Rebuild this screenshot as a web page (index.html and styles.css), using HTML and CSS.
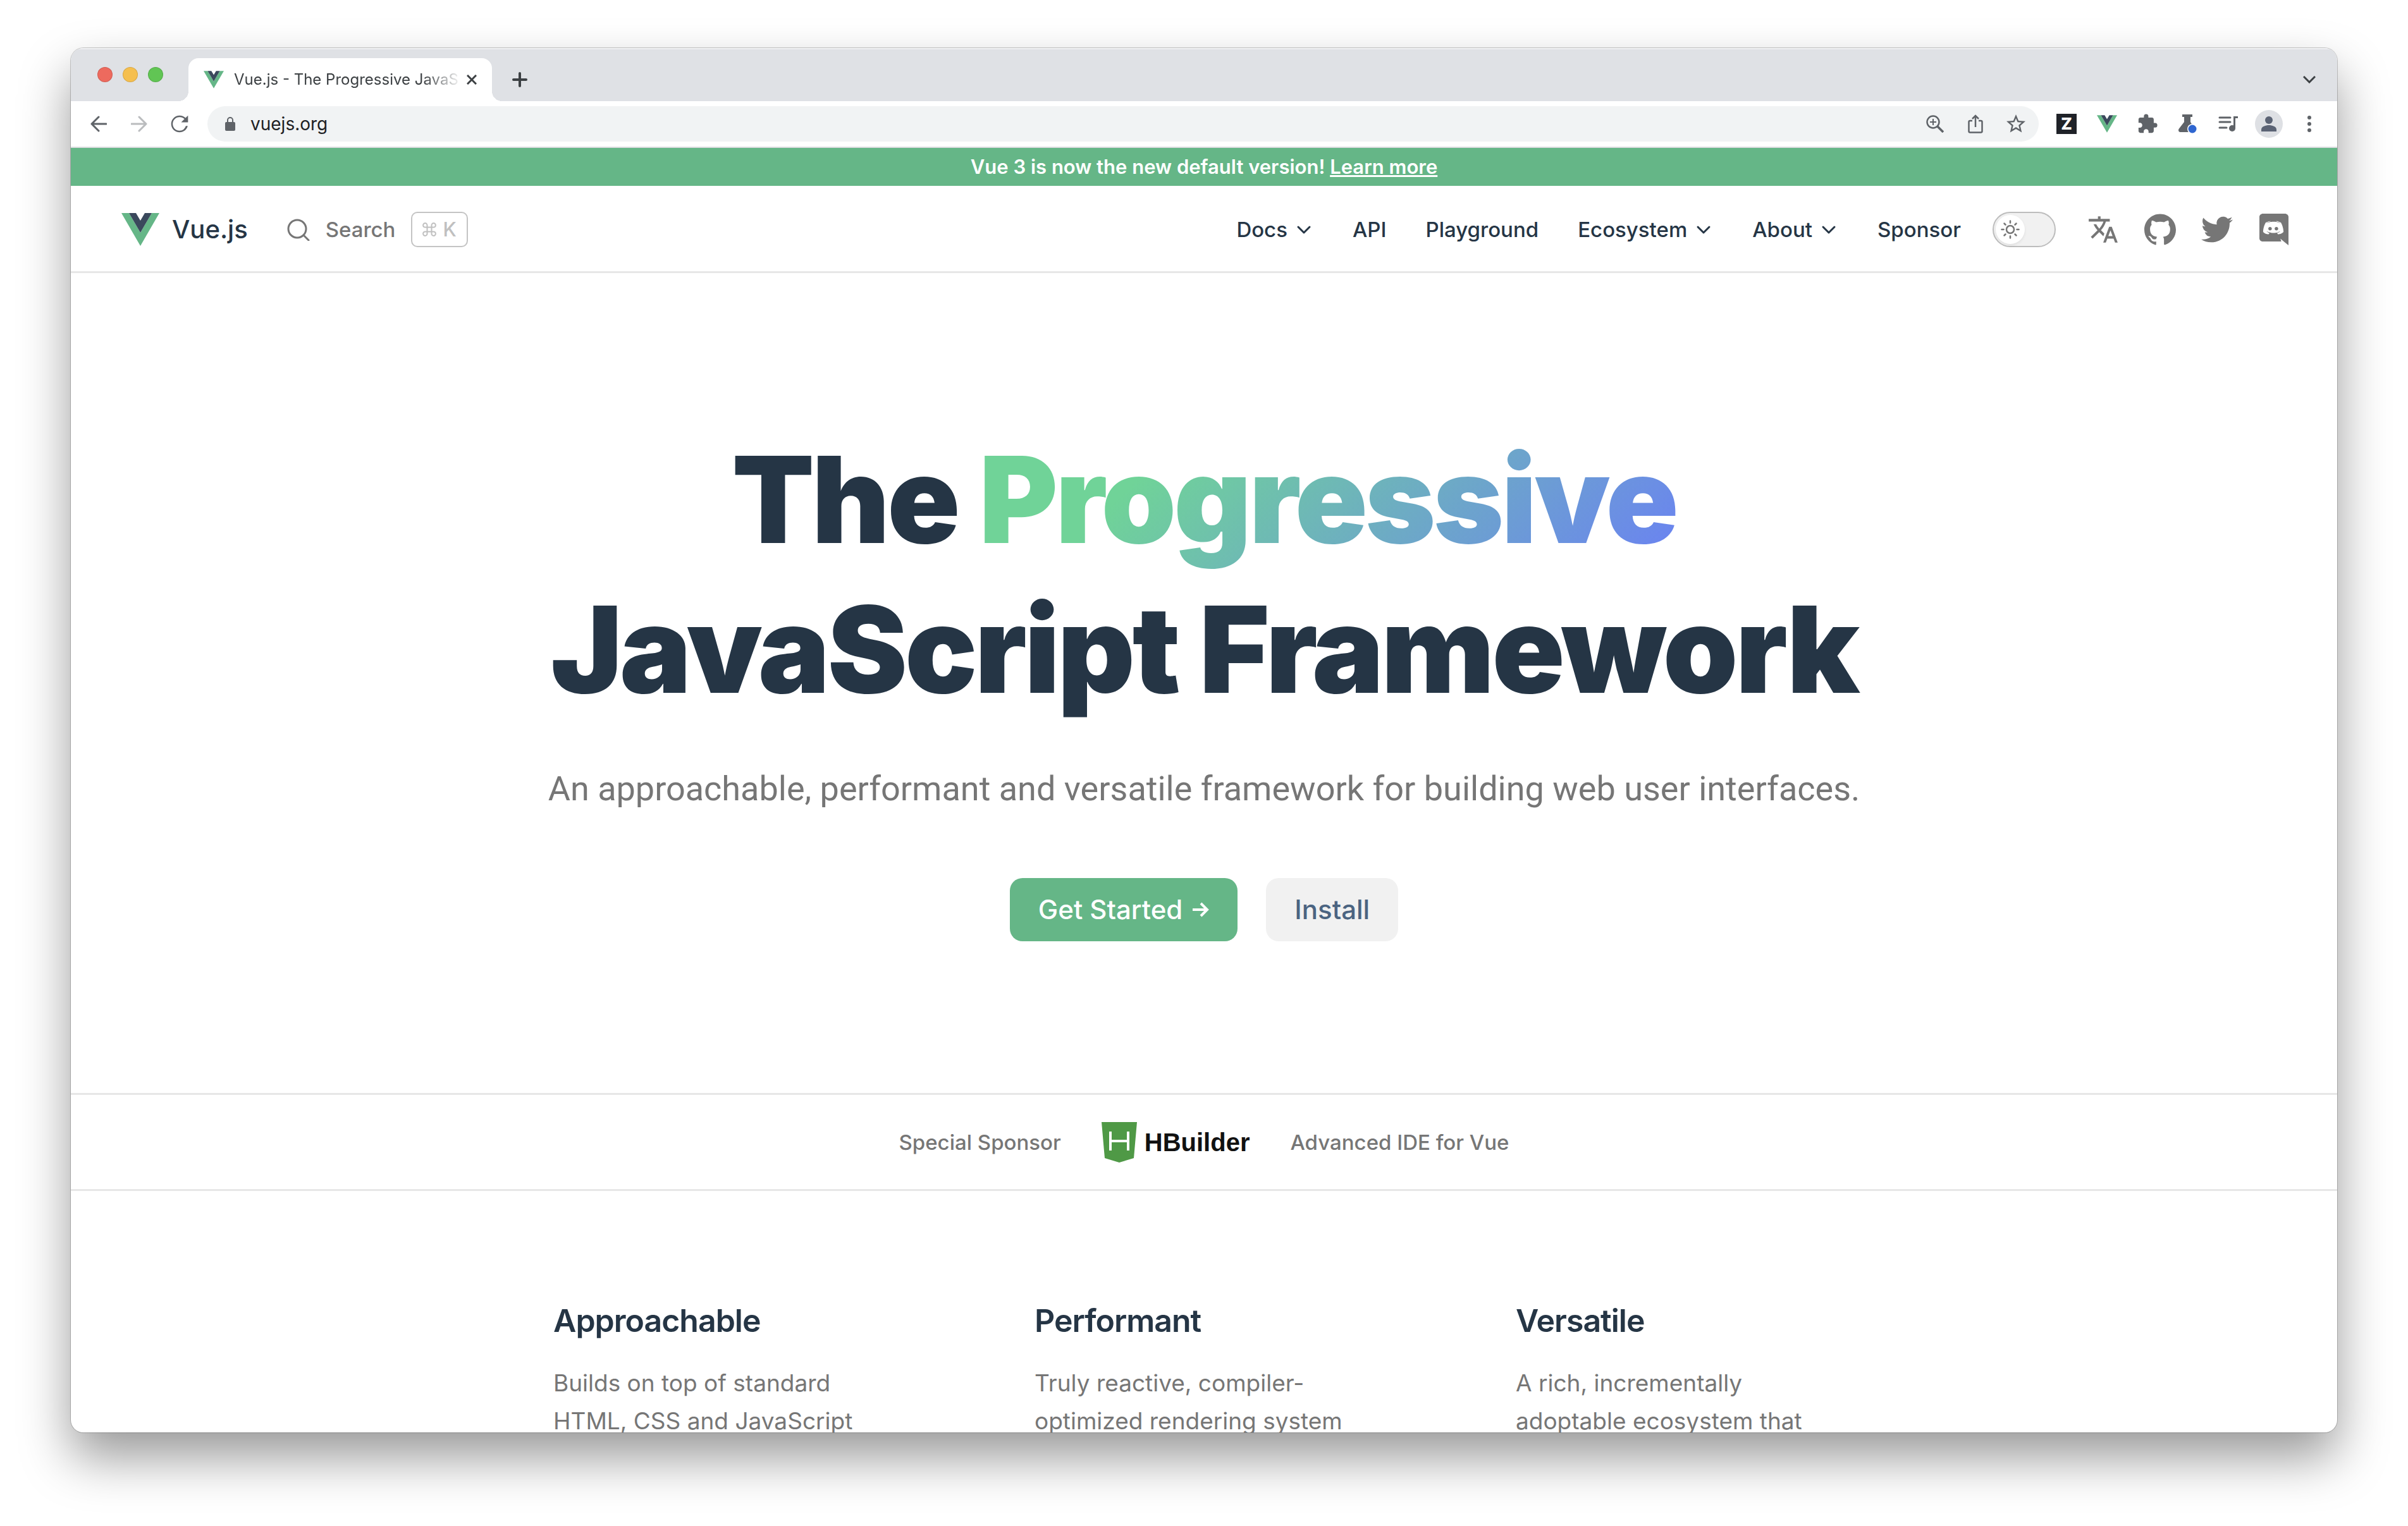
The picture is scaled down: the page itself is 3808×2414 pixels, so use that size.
FILE: index.html
```html
<!DOCTYPE html>
<html lang="en">
<head>
<meta charset="utf-8">
<title>Vue.js - The Progressive JavaScript Framework</title>
<link rel="stylesheet" href="styles.css">
</head>
<body>
<svg class="defs" aria-hidden="true">
  <symbol id="vue" viewBox="0 0 60 52">
    <path fill="#65b687" d="M0 0h12l18 31L48 0h12L30 52z"/>
    <path fill="#3a485c" d="M12 0h11l7 12 7-12h11L30 31z"/>
  </symbol>
  <symbol id="chevron" viewBox="0 0 30 30">
    <path fill="none" stroke="currentColor" stroke-width="3" stroke-linecap="round" stroke-linejoin="round" d="M6 11l9 9 9-9"/>
  </symbol>
</svg>

<div class="window">
  <div class="tabstrip">
    <div class="lights">
      <button class="light light-close" aria-label="Close window"></button>
      <button class="light light-min" aria-label="Minimize window"></button>
      <button class="light light-max" aria-label="Zoom window"></button>
    </div>
    <div class="tab">
      <svg class="favicon"><use href="#vue"/></svg>
      <span class="tab-title">Vue.js - The Progressive JavaS</span>
      <button class="icon-btn tab-close" aria-label="Close tab">
        <svg width="16" height="16" viewBox="0 0 16 16"><path fill="none" stroke="currentColor" stroke-width="3" d="M1 1l14 14M15 1L1 15"/></svg>
      </button>
    </div>
    <button class="icon-btn new-tab" aria-label="New tab">
      <svg width="24" height="24" viewBox="0 0 24 24"><path fill="none" stroke="currentColor" stroke-width="4" stroke-linecap="round" d="M12 2v20M2 12h20"/></svg>
    </button>
    <button class="icon-btn tab-search" aria-label="Search tabs">
      <svg width="20" height="12" viewBox="0 0 20 12"><path fill="none" stroke="currentColor" stroke-width="3" d="M1 1l9 9 9-9"/></svg>
    </button>
  </div>

  <div class="toolbar">
    <button class="icon-btn tool" aria-label="Back">
      <svg width="26" height="26" viewBox="0 0 26 26"><path fill="none" stroke="currentColor" stroke-width="3" stroke-linecap="round" stroke-linejoin="round" d="M25 13H2M13 2L2 13l11 11"/></svg>
    </button>
    <button class="icon-btn tool tool-off" aria-label="Forward">
      <svg width="26" height="26" viewBox="0 0 26 26"><path fill="none" stroke="currentColor" stroke-width="3" stroke-linecap="round" stroke-linejoin="round" d="M1 13h23M13 2l11 11-11 11"/></svg>
    </button>
    <button class="icon-btn tool" aria-label="Reload">
      <svg width="40" height="40" viewBox="0 0 24 24"><path fill="currentColor" d="M17.65 6.35A7.958 7.958 0 0 0 12 4c-4.42 0-7.99 3.58-7.99 8s3.57 8 7.99 8c3.73 0 6.84-2.55 7.73-6h-1.800A6.500 6.500 0 0 1 12 18.500c-3.600 0-6.500-2.900-6.500-6.500s2.900-6.500 6.500-6.500c1.800 0 3.400.700 4.600 1.900L13.500 10.500h6.500V4l-2.350 2.350z"/></svg>
    </button>
    <div class="omnibox">
      <svg class="lock" width="16" height="22" viewBox="0 0 16 22"><rect y="8" width="16" height="14" rx="2" fill="currentColor"/><path fill="none" stroke="currentColor" stroke-width="2" d="M4 9V5a4 4 0 0 1 8 0v4"/></svg>
      <input class="address" type="text" aria-label="Address" value="vuejs.org">
      <button class="icon-btn tool" aria-label="Zoom">
        <svg width="28" height="28" viewBox="0 0 28 28"><g fill="none" stroke="currentColor"><circle cx="11" cy="11" r="9.500" stroke-width="2.500"/><path stroke-width="2" d="M11 6v10M6 11h10"/><path stroke-width="3.500" d="M18 18l9 9"/></g></svg>
      </button>
      <button class="icon-btn tool" aria-label="Share">
        <svg width="24" height="30" viewBox="0 0 24 30"><g fill="none" stroke="currentColor" stroke-width="2.500"><path d="M7 10H3.500a2 2 0 0 0-2 2v14.500a2 2 0 0 0 2 2h17a2 2 0 0 0 2-2V12a2 2 0 0 0-2-2H17"/><path d="M12 20V2.500M7 7l5-5 5 5"/></g></svg>
      </button>
      <button class="icon-btn tool" aria-label="Bookmark">
        <svg width="36" height="36" viewBox="0 0 24 24"><path fill="currentColor" d="M22 9.240l-7.190-.620L12 2 9.190 8.630 2 9.240l5.460 4.730L5.820 21 12 17.270 18.180 21l-1.630-7.030L22 9.240zM12 15.400l-3.760 2.270 1-4.280-3.320-2.880 4.380-.380L12 6.100l1.710 4.040 4.380.380-3.320 2.880 1 4.280L12 15.400z"/></svg>
      </button>
    </div>
    <button class="icon-btn tool" aria-label="Z extension"><span class="zed">Z</span></button>
    <button class="icon-btn tool" aria-label="Vue devtools"><svg class="favicon"><use href="#vue"/></svg></button>
    <button class="icon-btn tool" aria-label="Extensions">
      <svg width="34" height="34" viewBox="0 0 24 24"><path fill="currentColor" d="M20.500 11H19V7c0-1.100-.900-2-2-2h-4V3.500a2.500 2.500 0 0 0-5 0V5H4c-1.100 0-1.990.900-1.990 2v3.800H3.500c1.490 0 2.700 1.210 2.700 2.700s-1.210 2.700-2.700 2.700H2V20c0 1.100.900 2 2 2h3.800v-1.500c0-1.490 1.210-2.700 2.700-2.700s2.700 1.210 2.700 2.700V22H17c1.100 0 2-.900 2-2v-4h1.500a2.500 2.500 0 0 0 0-5z"/></svg>
    </button>
    <button class="icon-btn tool" aria-label="Experiments">
      <svg width="30" height="30" viewBox="0 0 30 30"><path fill="currentColor" d="M6 0h16v4h-3v8l6 10v6H3c-3 0-3.500-3-2.500-5L9 12V4H6z"/><circle cx="22" cy="23" r="8" fill="#fff"/><circle cx="22" cy="23" r="6.500" fill="#2f66d0"/></svg>
    </button>
    <button class="icon-btn tool" aria-label="Media controls">
      <svg width="32" height="26" viewBox="0 0 32 26"><g stroke="currentColor" stroke-width="3" stroke-linecap="round" fill="none"><path d="M2 3h17M2 10h17M2 19h11"/><path d="M25.500 20V2.500H31" stroke-linecap="butt"/></g><circle cx="22" cy="20" r="5" fill="currentColor"/></svg>
    </button>
    <button class="icon-btn tool" aria-label="Profile">
      <svg width="44" height="44" viewBox="0 0 44 44"><circle cx="22" cy="22" r="22" fill="#dee0e4"/><circle cx="22" cy="16" r="6" fill="#5b6374"/><path fill="#5b6374" d="M10 34v-3c0-5 7-7 12-7s12 2 12 7v3z"/></svg>
    </button>
    <button class="icon-btn tool" aria-label="Menu">
      <svg width="6" height="26" viewBox="0 0 6 26"><g fill="currentColor"><circle cx="3" cy="3" r="3"/><circle cx="3" cy="13" r="3"/><circle cx="3" cy="23" r="3"/></g></svg>
    </button>
  </div>

  <div class="banner">Vue 3 is now the new default version! <a href="#">Learn more</a></div>

  <header class="navbar">
    <a class="brand" href="#"><svg class="brand-logo"><use href="#vue"/></svg>Vue.js</a>
    <button class="search">
      <svg width="36" height="36" viewBox="0 0 36 36"><g fill="none" stroke="currentColor" stroke-width="3" stroke-linecap="round"><circle cx="16" cy="17" r="14"/><path d="M26 27l8 8"/></g></svg>
      <span>Search</span>
      <kbd class="keys">
        <svg width="22" height="22" viewBox="0 0 22 22"><path fill="none" stroke="currentColor" stroke-width="2" d="M7.500 7.500h7v7h-7zM7.500 7.500H4.500a3.200 3.200 0 1 1 3-3zM14.500 7.500v-3a3.200 3.200 0 1 1 3 3zM14.500 14.500h3a3.200 3.200 0 1 1-3 3zM7.500 14.500v3a3.200 3.200 0 1 1-3-3z"/></svg>
        K
      </kbd>
    </button>
    <nav class="menu">
      <button class="menu-item">Docs<svg class="chevron"><use href="#chevron"/></svg></button>
      <a class="menu-item" href="#">API</a>
      <a class="menu-item" href="#">Playground</a>
      <button class="menu-item">Ecosystem<svg class="chevron"><use href="#chevron"/></svg></button>
      <button class="menu-item">About<svg class="chevron"><use href="#chevron"/></svg></button>
      <a class="menu-item" href="#">Sponsor</a>
    </nav>
    <button class="toggle" role="switch" aria-checked="false" aria-label="Toggle dark mode">
      <span class="knob">
        <svg width="30" height="30" viewBox="0 0 30 30"><g fill="none" stroke="currentColor" stroke-width="2.500"><circle cx="15" cy="15" r="6"/><path stroke-linecap="round" d="M15 1.500v3M15 25.500v3M1.500 15h3M25.500 15h3M5.500 5.500l2 2M22.500 22.500l2 2M5.500 24.500l2-2M22.500 7.500l2-2"/></g></svg>
      </span>
    </button>
    <div class="socials">
      <a href="#" aria-label="Languages"><svg width="50" height="50" viewBox="0 0 24 24"><path fill="currentColor" d="M12.870 15.070l-2.540-2.510.030-.030A17.520 17.520 0 0 0 14.070 6H17V4h-7V2H8v2H1v2h11.170C11.500 7.920 10.440 9.750 9 11.350 8.070 10.320 7.300 9.190 6.690 8h-2c.730 1.630 1.730 3.170 2.980 4.560l-5.090 5.020L4 19l5-5 3.110 3.110.760-2.040zM18.500 10h-2L12 22h2l1.120-3h4.750L21 22h2l-4.500-12zm-2.620 7l1.620-4.330L19.120 17h-3.240z"/></svg></a>
      <a href="#" aria-label="GitHub"><svg width="50" height="50" viewBox="0 0 24 24"><path fill="currentColor" d="M12 .297c-6.630 0-12 5.373-12 12 0 5.303 3.438 9.800 8.205 11.385.6.113.820-.258.820-.577 0-.285-.010-1.040-.015-2.040-3.338.724-4.042-1.610-4.042-1.610C4.422 18.070 3.633 17.700 3.633 17.700c-1.087-.744.084-.729.084-.729 1.205.084 1.838 1.236 1.838 1.236 1.070 1.835 2.809 1.305 3.495.998.108-.776.417-1.305.760-1.605-2.665-.3-5.466-1.332-5.466-5.930 0-1.310.465-2.380 1.235-3.220-.135-.303-.540-1.523.105-3.176 0 0 1.005-.322 3.300 1.230.960-.267 1.980-.399 3-.405 1.020.006 2.040.138 3 .405 2.280-1.552 3.285-1.230 3.285-1.230.645 1.653.240 2.873.120 3.176.765.840 1.230 1.910 1.230 3.220 0 4.610-2.805 5.625-5.475 5.920.420.360.810 1.096.810 2.220 0 1.606-.015 2.896-.015 3.286 0 .315.210.690.825.570C20.565 22.092 24 17.592 24 12.297c0-6.627-5.373-12-12-12"/></svg></a>
      <a href="#" aria-label="Twitter"><svg width="50" height="50" viewBox="0 0 24 24"><path fill="currentColor" d="M23.953 4.570a10 10 0 0 1-2.825.775 4.958 4.958 0 0 0 2.163-2.723c-.951.555-2.005.959-3.127 1.184a4.920 4.920 0 0 0-8.384 4.482C7.690 8.095 4.067 6.130 1.640 3.162a4.822 4.822 0 0 0-.666 2.475c0 1.710.870 3.213 2.188 4.096a4.904 4.904 0 0 1-2.228-.616v.060a4.923 4.923 0 0 0 3.946 4.827 4.996 4.996 0 0 1-2.212.085 4.936 4.936 0 0 0 4.604 3.417 9.867 9.867 0 0 1-6.102 2.105c-.390 0-.779-.023-1.170-.067a13.995 13.995 0 0 0 7.557 2.209c9.053 0 13.998-7.496 13.998-13.985 0-.210 0-.420-.015-.630A9.935 9.935 0 0 0 24 4.590z"/></svg></a>
      <a href="#" aria-label="Discord"><svg width="46" height="50" viewBox="2 0 20 24" preserveAspectRatio="none"><path fill="currentColor" d="M19.540 0c1.356 0 2.460 1.104 2.460 2.472v21.528l-2.580-2.280-1.452-1.344-1.536-1.428.636 2.220h-12.608c-1.356 0-2.460-1.104-2.460-2.472v-16.224c0-1.368 1.104-2.472 2.460-2.472h15.080zm-4.632 15.672c2.652-.084 3.672-1.824 3.672-1.824 0-3.864-1.728-6.996-1.728-6.996-1.728-1.296-3.372-1.260-3.372-1.260l-.168.192c2.040.624 2.988 1.524 2.988 1.524-1.248-.684-2.472-1.020-3.612-1.152-.864-.096-1.692-.072-2.424.024l-.204.024c-.420.036-1.440.192-2.724.756-.444.204-.708.348-.708.348s.996-.948 3.156-1.572l-.120-.144s-1.644-.036-3.372 1.260c0 0-1.728 3.132-1.728 6.996 0 0 1.008 1.740 3.660 1.824 0 0 .444-.540.804-.996-1.524-.456-2.100-1.416-2.100-1.416l.336.204.048.036.047.027.014.006.047.027c.3.168.6.3.876.408.492.192 1.080.384 1.764.516.9.168 1.956.228 3.108.012.564-.096 1.140-.264 1.740-.516.420-.156.888-.384 1.380-.708 0 0-.6.984-2.172 1.428.360.456.792.972.792.972zm-5.580-5.604c-.684 0-1.224.6-1.224 1.332 0 .732.552 1.332 1.224 1.332.684 0 1.224-.6 1.224-1.332.012-.732-.540-1.332-1.224-1.332zm4.380 0c-.684 0-1.224.6-1.224 1.332 0 .732.552 1.332 1.224 1.332.684 0 1.224-.6 1.224-1.332 0-.732-.540-1.332-1.224-1.332z"/></svg></a>
    </div>
  </header>

  <main>
    <section class="hero">
      <h1>The <span class="accent">Progressive</span><br>JavaScript Framework</h1>
      <p class="tagline">An approachable, performant and versatile framework for building web user interfaces.</p>
      <div class="actions">
        <a class="btn btn-primary" href="#">Get Started
          <svg width="26" height="26" viewBox="0 0 26 26"><path fill="none" stroke="currentColor" stroke-width="4" d="M0 13h23M13 3l10 10-10 10"/></svg>
        </a>
        <a class="btn" href="#">Install</a>
      </div>
    </section>
    <section class="sponsor">
      <span>Special Sponsor</span>
      <a class="hbuilder" href="#">
        <svg width="56" height="64" viewBox="0 0 56 64"><path fill="#4f9946" d="M0 0h56l-5 57-23 7-23-7z"/><path fill="none" stroke="#fff" stroke-width="4" d="M14 15v30M42 15v30M14 30h28"/></svg>
        HBuilder
      </a>
      <span>Advanced IDE for Vue</span>
    </section>
    <section class="features">
      <div><h2>Approachable</h2><p>Builds on top of standard HTML, CSS and JavaScript</p></div>
      <div><h2>Performant</h2><p>Truly reactive, compiler-optimized rendering system</p></div>
      <div><h2>Versatile</h2><p>A rich, incrementally adoptable ecosystem that</p></div>
    </section>
  </main>
</div>
</body>
</html>
```
FILE: styles.css
```css
:root {
  --green: #65b687;
  --ink: #253545;
  --muted: #767676;
  --line: #e7e7e7;
  --chrome: #dfe1e5;
}

* { box-sizing: border-box; }

body {
  margin: 0;
  height: 100vh;
  padding: 76px 112px 148px;
  background: #fff;
  color: var(--ink);
  font: 500 33px/60px Inter, "Liberation Sans", sans-serif;
  overflow: hidden;
}

a { color: inherit; text-decoration: none; }
button { font: inherit; color: inherit; background: none; border: 0; padding: 0; }
h1, h2, p { margin: 0; }
svg { display: block; flex: none; }
.defs { position: absolute; width: 0; height: 0; }

.window {
  height: 100%;
  display: flex;
  flex-direction: column;
  overflow: hidden;
  border-radius: 20px;
  background: #fff;
  box-shadow: 0 0 0 1px rgba(0, 0, 0, .2), 0 40px 80px rgba(0, 0, 0, .4);
}
.window > * { flex: none; }

/* Browser chrome */
.icon-btn { display: flex; align-items: center; justify-content: center; }

.tabstrip {
  display: flex;
  align-items: center;
  height: 84px;
  padding-left: 42px;
  background: var(--chrome);
  box-shadow: inset 0 2px #f0f1f3;
  color: #3c4043;
}
.lights { display: flex; gap: 16px; width: 144px; }
.light { width: 24px; height: 24px; border-radius: 50%; border: 1px solid rgba(0, 0, 0, .12); }
.light-close { background: #ed6a5e; }
.light-min { background: #f5bf4f; }
.light-max { background: #61c554; }

.tab {
  position: relative;
  display: flex;
  align-items: center;
  align-self: flex-end;
  width: 480px;
  height: 68px;
  padding: 0 24px;
  border-radius: 16px 16px 0 0;
  background: #fff;
}
.tab::before,
.tab::after {
  content: "";
  position: absolute;
  bottom: 0;
  width: 16px;
  height: 16px;
}
.tab::before { right: 100%; background: radial-gradient(circle at 0 0, transparent 16px, #fff 16px); }
.tab::after { left: 100%; background: radial-gradient(circle at 100% 0, transparent 16px, #fff 16px); }
.favicon { width: 32px; height: 28px; }
.tab-title {
  flex: 1;
  margin-left: 16px;
  overflow: hidden;
  white-space: nowrap;
  font-weight: 400;
  font-size: 24px;
  -webkit-mask-image: linear-gradient(to right, #000 300px, transparent 360px);
  mask-image: linear-gradient(to right, #000 300px, transparent 360px);
}
.tab-close { width: 16px; margin-left: 12px; }
.new-tab { width: 88px; height: 68px; align-self: flex-end; }
.tab-search { width: 88px; height: 68px; margin-left: auto; align-self: flex-end; }

.toolbar {
  display: flex;
  align-items: center;
  height: 74px;
  padding: 0 12px;
  border-bottom: 2px solid #dcdde0;
  color: #5f6368;
}
.tool { width: 64px; height: 56px; }
.tool-off { color: #babcbe; }
.omnibox {
  flex: 1;
  display: flex;
  align-items: center;
  height: 56px;
  margin: 0 12px;
  padding: 0 4px 0 28px;
  border-radius: 28px;
  background: #f1f3f4;
}
.address {
  flex: 1;
  min-width: 0;
  margin-left: 24px;
  padding: 0;
  border: 0;
  background: none;
  color: #202124;
  font: 400 28px/40px Inter, "Liberation Sans", sans-serif;
}
.zed {
  width: 32px;
  height: 32px;
  background: #1f2228;
  color: #fff;
  font-weight: 800;
  font-size: 26px;
  line-height: 32px;
}

/* Site */
.banner {
  background: var(--green);
  color: #fff;
  font-weight: 600;
  font-size: 31px;
  text-align: center;
}
.banner a { text-decoration: underline; text-decoration-thickness: 3px; }

.navbar {
  display: flex;
  align-items: center;
  height: 138px;
  padding: 3px 75px 0 80px;
  border-bottom: 3px solid var(--line);
}
.brand { display: flex; align-items: center; gap: 20px; font-size: 40px; }
.brand-logo { width: 60px; height: 52px; }
.search { display: flex; align-items: center; gap: 25px; margin-left: 62px; color: var(--muted); }
.keys {
  display: flex;
  align-items: center;
  gap: 10px;
  height: 56px;
  padding: 0 16px;
  border: 2px solid #c4c4c4;
  border-radius: 10px;
  color: #c0c0c0;
  font: inherit;
  font-size: 31px;
}
.menu { display: flex; gap: 62px; margin-left: auto; }
.menu-item { display: flex; align-items: center; }
.chevron { width: 30px; height: 30px; margin-left: 11px; }
.toggle {
  width: 100px;
  height: 56px;
  margin: 0 50px;
  padding: 3px;
  border: 2px solid #bdbdbd;
  border-radius: 28px;
  background: #f1f1f1;
}
.knob {
  display: flex;
  align-items: center;
  justify-content: center;
  width: 46px;
  height: 46px;
  border-radius: 50%;
  background: #fff;
  box-shadow: 0 2px 4px rgba(0, 0, 0, .08);
  color: var(--muted);
}
.socials { display: flex; gap: 40px; color: var(--muted); }
.socials a { display: flex; justify-content: center; width: 50px; }

.hero { padding: 240px 40px; text-align: center; }
h1 { font-weight: 900; font-size: 190px; line-height: 237px; letter-spacing: -4px; }
.accent {
  background: linear-gradient(135deg, #70d398 25%, #6a80f4);
  -webkit-background-clip: text;
  background-clip: text;
  color: transparent;
}
.tagline {
  margin: 61px 0 100px;
  color: var(--muted);
  font: 400 54px/82px Roboto, Inter, sans-serif;
}
.actions { display: flex; justify-content: center; gap: 45px; }
.btn {
  display: flex;
  align-items: center;
  gap: 16px;
  height: 100px;
  padding: 0 45px;
  border-radius: 20px;
  background: #f1f1f1;
  color: #4b6481;
  font-size: 42px;
}
.btn-primary { background: var(--green); color: #fff; }

.sponsor {
  display: flex;
  align-items: center;
  justify-content: center;
  gap: 64px;
  height: 155px;
  border: solid var(--line);
  border-width: 3px 0;
  color: var(--muted);
}
.hbuilder {
  display: flex;
  align-items: center;
  gap: 12px;
  color: #111;
  font: 700 40px/60px "Liberation Sans", sans-serif;
}

.features {
  display: grid;
  grid-template-columns: repeat(3, 536px);
  justify-content: center;
  gap: 225px;
  padding: 160px 0;
}
h2 { font-weight: 600; font-size: 50px; line-height: 90px; letter-spacing: -1px; }
.features p { margin-top: 24px; padding-right: 20px; color: var(--muted); font-weight: 400; font-size: 37px; }
```
